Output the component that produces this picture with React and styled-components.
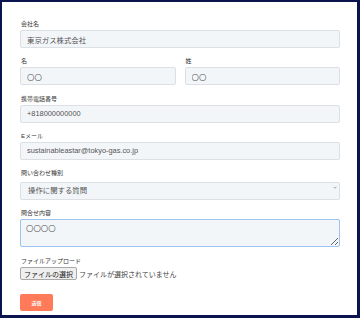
import React from "react";
import styled, { createGlobalStyle } from "styled-components";

const GlobalStyle = createGlobalStyle`
  html, body { margin: 0; padding: 0; background: #fff; }
  body { font-family: "Liberation Sans", "Noto Sans CJK JP", sans-serif; }
`;

const Frame = styled.div`
  width: 360px;
  height: 318px;
  box-sizing: border-box;
  border: 2px solid #0c1450;
  border-right-width: 3px;
  border-bottom-width: 3px;
  padding: 18px 17px 0 18px;
  background: #fff;
`;

const Form = styled.form`
  width: 320px;
  display: flex;
  flex-direction: column;
`;

const Field = styled.div`
  display: flex;
  flex-direction: column;
  margin-bottom: ${p => p.gap || 9.3}px;
`;

const Row = styled.div`
  display: grid;
  grid-template-columns: 1fr 1fr;
  column-gap: 9px;
`;

const Label = styled.label`
  font-size: 6px;
  line-height: 8px;
  height: 8px;
  color: #333;
  margin-bottom: 2px;
  padding-left: 1px;
  white-space: nowrap;
`;

const Input = styled.input`
  box-sizing: border-box;
  width: 100%;
  height: 18px;
  margin: 0;
  padding: 0 6px;
  border: 1px solid #dcdfe4;
  border-radius: 2px;
  background: #f3f6f9;
  font-family: inherit;
  font-size: 7.4px;
  color: #555;
  outline: none;
`;

const SelectWrap = styled.div`
  position: relative;
`;

const Select = styled.select`
  box-sizing: border-box;
  width: 100%;
  height: 18px;
  margin: 0;
  padding: 0 7px;
  border: 1px solid #dcdfe4;
  border-radius: 2px;
  background: #f3f6f9;
  font-family: inherit;
  font-size: 7.4px;
  color: #555;
  appearance: none;
  outline: none;
`;

const Chevron = styled.svg`
  position: absolute;
  right: 3px;
  top: 7px;
  width: 4px;
  height: 3px;
  pointer-events: none;
`;

const TextArea = styled.textarea`
  box-sizing: border-box;
  width: 100%;
  height: 28px;
  margin: 0;
  padding: 4px 5px;
  border: 1px solid #9cc4ef;
  border-radius: 2px;
  background: #f3f6f9;
  font-family: inherit;
  font-size: 7.4px;
  line-height: 9px;
  color: #555;
  resize: vertical;
  outline: none;
  display: block;
`;

const FileRow = styled.div`
  display: flex;
  align-items: center;
  gap: 2px;
  height: 13px;
`;

const FileButton = styled.span`
  box-sizing: border-box;
  height: 13px;
  width: 57px;
  display: flex;
  align-items: center;
  justify-content: center;
  background: #efefef;
  border: 1px solid #a8a8a8;
  border-radius: 2px;
  font-size: 7px;
  color: #222;
  white-space: nowrap;
`;

const FileText = styled.span`
  font-size: 7px;
  color: #444;
  white-space: nowrap;
`;

const Actions = styled.div`
  display: flex;
`;

const Submit = styled.button`
  width: 33px;
  height: 17px;
  margin: 0;
  padding: 0;
  border: none;
  border-radius: 2px;
  background: #fe7a59;
  color: #fff;
  font-family: inherit;
  font-size: 5px;
  font-weight: bold;
`;

const App = () => {
  return (
    <>
      <GlobalStyle />
      <Frame>
        <Form onSubmit={e => e.preventDefault()}>
          <Field>
            <Label>会社名</Label>
            <Input defaultValue="東京ガス株式会社" />
          </Field>
          <Row>
            <Field>
              <Label>名</Label>
              <Input defaultValue="〇〇" />
            </Field>
            <Field>
              <Label>姓</Label>
              <Input defaultValue="〇〇" />
            </Field>
          </Row>
          <Field>
            <Label>携帯電話番号</Label>
            <Input defaultValue="+818000000000" />
          </Field>
          <Field>
            <Label>Eメール</Label>
            <Input defaultValue="sustainableastar@tokyo-gas.co.jp" />
          </Field>
          <Field>
            <Label>問い合わせ種別</Label>
            <SelectWrap>
              <Select defaultValue="op">
                <option value="op">操作に関する質問</option>
                <option value="other">その他</option>
              </Select>
              <Chevron viewBox="0 0 10 8">
                <path d="M1 2 L5 6 L9 2" fill="none" stroke="#777" strokeWidth="1.8" />
              </Chevron>
            </SelectWrap>
          </Field>
          <Field gap={10.5}>
            <Label>問合せ内容</Label>
            <TextArea defaultValue="〇〇〇〇" />
          </Field>
          <Field gap={14}>
            <Label>ファイルアップロード</Label>
            <FileRow>
              <FileButton>ファイルの選択</FileButton>
              <FileText>ファイルが選択されていません</FileText>
            </FileRow>
          </Field>
          <Actions>
            <Submit type="submit">送信</Submit>
          </Actions>
        </Form>
      </Frame>
    </>
  );
};

export default App;
